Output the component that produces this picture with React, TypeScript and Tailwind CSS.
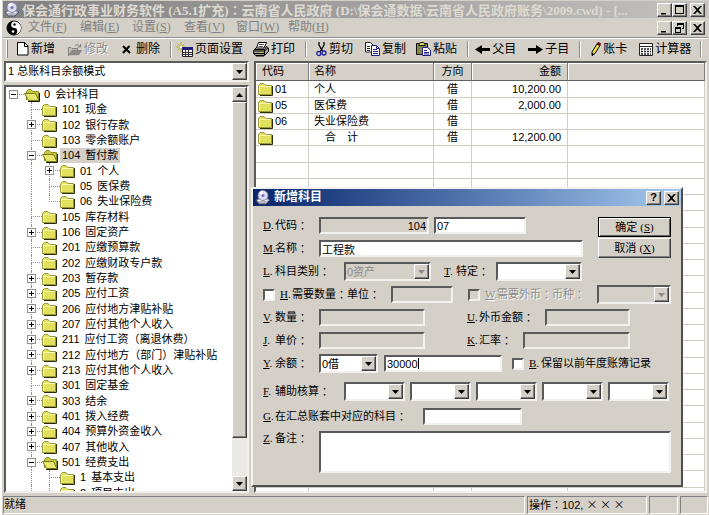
import type { ReactNode } from "react";
import clsx from "clsx";

const raised =
  "border border-t-white border-l-white border-b-[#404040] border-r-[#404040] shadow-[inset_-1px_-1px_0_#808080] bg-[#d4d0c8]";
const sunken =
  "border-2 border-t-[#5a5a5a] border-l-[#5a5a5a] border-b-[#f3f1ed] border-r-[#f3f1ed]";

/* ---------- icons ---------- */

const DiscIcon = () => (
  <svg width="16" height="15" viewBox="0 0 16 15" className="shrink-0">
    <path d="M1 10 L5 8 H12 L15 10 L11 14 H4 Z" fill="#b8b8c4" stroke="#50506a" />
    <path d="M3 10.5 H12" stroke="#fff" />
    <circle cx="8" cy="5.5" r="5" fill="#dcdcf4" stroke="#8484a8" />
    <path d="M8 5.5 L4 2.5 A5 5 0 0 1 8 .8 Z" fill="#fff" />
    <circle cx="8" cy="5.5" r="1.5" fill="#6c6cb8" />
  </svg>
);

const YinYangIcon = () => (
  <svg width="16" height="16" viewBox="0 0 16 16" className="shrink-0">
    <circle cx="8" cy="8" r="7" fill="#000" stroke="#000" />
    <path d="M9 1.5 A6.5 6.5 0 0 1 8 14.5 A3.2 3.2 0 0 0 8 8 A3.2 3.2 0 0 1 9 1.5" fill="#fff" />
    <circle cx="8.500" cy="4.500" r="1.200" fill="#000" />
    <circle cx="7" cy="11.500" r="1.300" fill="#fff" />
  </svg>
);

const FolderIcon = () => (
  <svg width="16" height="14" viewBox="0 0 16 14" className="shrink-0">
    <path d="M2 13.5 H14.5 V4" fill="none" stroke="#2c2c08" />
    <path d="M.5 12.5 V3.5 L2.5 1.5 H6 L8 3.5 H13.5 V12.5 Z" fill="#e2e05c" stroke="#98983c" />
    <path d="M1.5 12 V4.5 H13" fill="none" stroke="#fafab4" />
  </svg>
);

const OpenFolderIcon = () => (
  <svg width="17" height="14" viewBox="0 0 17 14" className="shrink-0">
    <path d="M2.5 12 V3.5 L4.5 1.5 H7 L9 3.5 H14.5 V12" fill="#c8c83c" stroke="#8c8c28" />
    <path d="M.5 5.5 H11.5 L15 12.5 H4.5 Z" fill="#e8e66c" stroke="#77771c" />
    <path d="M4 13.5 H15.5 V5" fill="none" stroke="#1c1c00" />
  </svg>
);

const NewIcon = () => (
  <svg width="12" height="14" viewBox="0 0 12 14">
    <path d="M.5 .5 H7.5 L11 4 V13 H.5 Z" fill="#fff" stroke="#000" />
    <path d="M7.5 .5 V4.5 H11" fill="none" stroke="#000" />
  </svg>
);

const EditIcon = () => (
  <svg width="15" height="13" viewBox="0 0 15 13">
    <path d="M1.5 12.5 V4.5 H4 L5 5.5 H10.5 V7.5" fill="#c4c0b8" stroke="#808080" />
    <path d="M1.5 12.5 L5 7.5 H14.5 L11 12.5 Z" fill="#8c8a84" stroke="#808080" />
    <path d="M8 2.5 Q11 0 13 3.5 M13.5 1 V4 H10.5" fill="none" stroke="#808080" />
    <path d="M2 13 H12" stroke="#fff" />
  </svg>
);

const DeleteIcon = () => (
  <svg width="9" height="9" viewBox="0 0 9 9">
    <path d="M1 1 L8 8 M7.5 1 L1 8" stroke="#000" strokeWidth="2" />
  </svg>
);

const PageSetupIcon = () => (
  <svg width="17" height="15" viewBox="0 0 17 15">
    <path d="M5 0 V10 M0 5 H10 M1.5 1.5 L8.5 8.5 M8.5 1.5 L1.5 8.5" stroke="#b4ac28" />
    <path d="M4 4 h2 v2 h-2 z" fill="#fff" />
    <path d="M6.500 5.500 H16.500 V14.500 H6.500 Z" fill="#fff" stroke="#222" />
    <path d="M6 5 H17 V8 H6 Z" fill="#20207c" />
    <path d="M7 10.500 H16 M7 12.500 H16 M9.500 8 V14 M12.500 8 V14" stroke="#333" />
  </svg>
);

const PrintIcon = () => (
  <svg width="16" height="15" viewBox="0 0 16 15">
    <path d="M5.500 .5 H13.500 L11 6 H3.500 Z" fill="#fff" stroke="#000" />
    <path d="M6 2.500 H11 M5.500 4.500 H10" stroke="#555" />
    <path d="M3.500 5.500 L.5 8.500 V11.500 L3 13.500 H11.500 L15.500 9.500 V6 L13.500 4.500 L11.500 7.500 H2" fill="#a8a69c" stroke="#000" />
    <path d="M1 9 H11.500 L15 6 M1 11.500 H11.500 M11.500 8 V13" fill="none" stroke="#000" />
    <path d="M7 10.500 H9.500" stroke="#e0d820" />
    <path d="M3 14 H11" stroke="#000" />
  </svg>
);

const CutIcon = () => (
  <svg width="11" height="15" viewBox="0 0 11 15">
    <path d="M3 0 V3 L7 10 M8 0 V3 L4 10" fill="none" stroke="#000" strokeWidth="1.3" />
    <circle cx="2.800" cy="11.500" r="2" fill="none" stroke="#20209c" strokeWidth="1.300" />
    <circle cx="8" cy="11" r="2" fill="none" stroke="#20209c" strokeWidth="1.300" />
  </svg>
);

const CopyIcon = () => (
  <svg width="15" height="14" viewBox="0 0 15 14">
    <path d="M.5 .5 H5.500 L8.500 3.500 V10 H.5 Z" fill="#fff" stroke="#222" />
    <path d="M2 4.500 H5 M2 6.500 H5 M2 8.500 H5" stroke="#333" />
    <path d="M6.500 3.500 H11.500 L14.500 6.500 V13.500 H6.500 Z" fill="#fff" stroke="#20208c" />
    <path d="M8 7.500 H12 M8 9.500 H13 M8 11.500 H13 M11.500 4 V6.500 H14" fill="none" stroke="#20208c" />
  </svg>
);

const PasteIcon = () => (
  <svg width="15" height="14" viewBox="0 0 15 14">
    <path d="M.5 1.500 H11.500 V12.500 H.5 Z" fill="#86864a" stroke="#111" />
    <path d="M3 3.500 V1.500 L5 .5 H7 L9 1.500 V3.500 Z" fill="#e0dc68" stroke="#111" />
    <path d="M6.500 5.500 H11.500 L14.500 8 V13.500 H6.500 Z" fill="#fff" stroke="#20208c" />
    <path d="M8 8.500 H11 M8 10.500 H13 M8 12 H13" stroke="#20208c" />
  </svg>
);

const ArrowIcon = ({ right }: { right?: boolean }) => (
  <svg width="15" height="9" viewBox="0 0 15 9">
    <path
      d={right ? "M15 4.500 L8 0 V3 H0 V6 H8 V9 Z" : "M0 4.500 L7 0 V3 H15 V6 H7 V9 Z"}
      fill="#000"
    />
  </svg>
);

const PencilIcon = () => (
  <svg width="10" height="14" viewBox="0 0 10 14">
    <path d="M1 10 L6 2 L9 3.500 L4 11.500 L1 13.500 Z" fill="#ece440" stroke="#000" />
    <path d="M6 2 L7 0.500 L9.500 1.500 L9 3.500 Z" fill="#7c1010" stroke="#5c0c0c" />
    <path d="M1 11 V14 L3.500 12 Z" fill="#000" />
  </svg>
);

const CalculatorIcon = () => (
  <svg width="14" height="13" viewBox="0 0 14 13">
    <path d="M.5 .5 H13.500 V12.500 H.5 Z" fill="#fff" stroke="#222" />
    <path d="M0 3.500 H14" stroke="#222" />
    <path d="M2 6 H12 M2 8.500 H12 M2 11 H12" stroke="#222" strokeWidth="1.500" strokeDasharray="2 1" />
  </svg>
);

const DownIcon = ({ className = "text-black" }: { className?: string }) => (
  <svg width="7" height="4" viewBox="0 0 7 4" className={className}>
    <path d="M0 0 H7 L3.500 4 Z" fill="currentColor" />
  </svg>
);

const captionPaths = {
  minimize: "M2 8 H7 V9.500 H2 Z",
  maximize: "M1 0 H10 V9 H1 Z M2 2 V8 H9 V2 Z",
  restore: "M3 0 H10 V6 H8 V5 H9 V2 H4 V3 H3 Z M1 4 H7 V10 H1 Z M2 6 V9 H6 V6 Z",
  close: "M1 1 H3 L5.500 3.500 L8 1 H10 L6.500 5 L10 9 H8 L5.500 6.500 L3 9 H1 L4.500 5 Z",
};

const CaptionButton = ({ kind, className }: { kind: keyof typeof captionPaths; className?: string }) => (
  <button
    type="button"
    aria-label={kind}
    className={clsx("flex h-[14px] w-[15px] items-center justify-center", raised, className)}
  >
    <svg width="11" height="10" viewBox="0 0 11 10">
      <path d={captionPaths[kind]} fillRule="evenodd" />
    </svg>
  </button>
);

/* ---------- data ---------- */

const menus = [
  ["文件", "F"],
  ["编辑", "E"],
  ["设置", "S"],
  ["查看", "V"],
  ["窗口", "W"],
  ["帮助", "H"],
];

type Node = { level: number; code: string; name: string; sign?: "+" | "-"; last?: boolean };

const nodes: Node[] = [
  { level: 0, code: "0", name: "会计科目", sign: "-" },
  { level: 1, code: "101", name: "现金" },
  { level: 1, code: "102", name: "银行存款", sign: "+" },
  { level: 1, code: "103", name: "零余额账户" },
  { level: 1, code: "104", name: "暂付款", sign: "-" },
  { level: 2, code: "01", name: "个人", sign: "+" },
  { level: 2, code: "05", name: "医保费" },
  { level: 2, code: "06", name: "失业保险费", last: true },
  { level: 1, code: "105", name: "库存材料" },
  { level: 1, code: "106", name: "固定资产", sign: "+" },
  { level: 1, code: "201", name: "应缴预算款" },
  { level: 1, code: "202", name: "应缴财政专户款" },
  { level: 1, code: "203", name: "暂存款", sign: "+" },
  { level: 1, code: "205", name: "应付工资", sign: "+" },
  { level: 1, code: "206", name: "应付地方津贴补贴", sign: "+" },
  { level: 1, code: "207", name: "应付其他个人收入", sign: "+" },
  { level: 1, code: "211", name: "应付工资（离退休费）", sign: "+" },
  { level: 1, code: "212", name: "应付地方（部门）津贴补贴", sign: "+" },
  { level: 1, code: "213", name: "应付其他个人收入", sign: "+" },
  { level: 1, code: "301", name: "固定基金" },
  { level: 1, code: "303", name: "结余", sign: "+" },
  { level: 1, code: "401", name: "拨入经费", sign: "+" },
  { level: 1, code: "404", name: "预算外资金收入", sign: "+" },
  { level: 1, code: "407", name: "其他收入", sign: "+" },
  { level: 1, code: "501", name: "经费支出", sign: "-" },
  { level: 2, code: "1", name: "基本支出" },
  { level: 2, code: "2", name: "项目支出" },
];

const rows = [
  { code: "01", name: "个人", side: "借", amount: "10,200.00" },
  { code: "05", name: "医保费", side: "借", amount: "2,000.00" },
  { code: "06", name: "失业保险费", side: "借", amount: "" },
  { code: "", name: "\u3000合\u3000计", side: "借", amount: "12,200.00" },
];

/* ---------- main window ---------- */

// the TC face centres the full-width colon in its cell
const Colon = () => <span className="font-['Noto_Sans_CJK_TC',sans-serif]">：</span>;

const ToolButton = ({ icon, text, disabled, className }: {
  icon: ReactNode;
  text: string;
  disabled?: boolean;
  className?: string;
}) => (
  <button
    type="button"
    disabled={disabled}
    className={clsx(
      "flex shrink-0 items-center gap-[2px] whitespace-nowrap",
      disabled && "text-[#8c8a86] [text-shadow:1px_1px_0_#fff]",
      className
    )}
  >
    {icon}
    {text}
  </button>
);

const Divider = () => <span className="h-4 w-[2px] shrink-0 border-l border-r border-l-[#909090] border-r-white" />;

const Toolbar = () => (
  <div className="flex h-[21px] items-center border-t border-white pr-1 pl-[3px] text-[12px]">
    <span className="mr-[9px] h-[18px] w-[2px] shrink-0 border-l border-r border-l-white border-r-[#808080]" />
    <ToolButton icon={<NewIcon />} text="新增" className="mr-3" />
    <ToolButton icon={<EditIcon />} text="修改" disabled className="mr-[14px]" />
    <ToolButton icon={<DeleteIcon />} text="删除" className="mr-[10px] gap-[5px]" />
    <Divider />
    <ToolButton icon={<PageSetupIcon />} text="页面设置" className="mr-[10px] ml-1" />
    <ToolButton icon={<PrintIcon />} text="打印" className="mr-[10px]" />
    <Divider />
    <ToolButton icon={<CutIcon />} text="剪切" className="mr-3 ml-[9px]" />
    <ToolButton icon={<CopyIcon />} text="复制" className="mr-[10px]" />
    <ToolButton icon={<PasteIcon />} text="粘贴" className="mr-[10px]" />
    <Divider />
    <ToolButton icon={<ArrowIcon />} text="父目" className="mr-3 ml-[6px]" />
    <ToolButton icon={<ArrowIcon right />} text="子目" className="mr-[10px]" />
    <Divider />
    <ToolButton icon={<PencilIcon />} text="账卡" className="mr-3 ml-[10px] gap-1" />
    <ToolButton icon={<CalculatorIcon />} text="计算器" className="mr-[9px]" />
    <Divider />
  </div>
);

const dots = "border-dotted border-[#909090]";

const TreeRow = ({ node }: { node: Node }) => {
  const open = node.sign === "-";
  return (
    <li className="flex h-[15px] nth-[3n]:h-4">
      {node.level > 0 && <span className="w-[18px] shrink-0" />}
      {node.level > 1 && <span className={clsx("ml-[7px] w-[11px] shrink-0 border-l", dots)} />}
      <span className="relative ml-[7px] flex w-[11px] shrink-0 flex-col">
        <span className={clsx("h-2 border-b", dots, node.level > 0 && "border-l")} />
        {node.level > 0 && !node.last && <span className={clsx("flex-1 border-l", dots)} />}
        {node.sign && (
          <button
            type="button"
            aria-label={open ? "折叠" : "展开"}
            className="absolute top-[3px] -left-1 flex size-[9px] items-center justify-center border border-[#909090] bg-white"
          >
            <svg width="5" height="5" viewBox="0 0 5 5">
              <path d={open ? "M0 2 H5 V3 H0 Z" : "M0 2 H2 V0 H3 V2 H5 V3 H3 V5 H2 V3 H0 Z"} />
            </svg>
          </button>
        )}
      </span>
      <span className="flex w-[17px] shrink-0 items-center">{open ? <OpenFolderIcon /> : <FolderIcon />}</span>
      <span
        className={clsx(
          "ml-px flex items-center gap-[5px] pr-[2px] pl-[2px] leading-[15px] whitespace-nowrap",
          node.code === "104" && "bg-[#d4d0c8]"
        )}
      >
        <span>{node.code}</span>
        {node.name}
      </span>
    </li>
  );
};

const Sidebar = () => (
  <aside className="flex w-[245px] shrink-0 flex-col">
    <div className={clsx("relative h-[21px] bg-white", sunken)}>
      <select aria-label="模式" className="h-full w-full appearance-none pl-[2px] outline-none">
        <option>1 总账科目余额模式</option>
      </select>
      <span className={clsx("pointer-events-none absolute inset-y-0 right-0 flex w-[15px] items-center justify-center", raised)}>
        <DownIcon />
      </span>
    </div>
    <div className={clsx("mt-[3px] flex min-h-0 flex-1 bg-white", sunken)}>
      <ul className="min-w-0 flex-1 overflow-hidden">
        {nodes.map((node) => (
          <TreeRow key={node.level + node.code} node={node} />
        ))}
      </ul>
      <div className="flex w-[15px] flex-col bg-[#ebe9e5]">
        <button type="button" aria-label="向上" className={clsx("flex h-[15px] items-center justify-center", raised)}>
          <DownIcon className="rotate-180" />
        </button>
        <div className={clsx("h-[336px]", raised)} />
        <div className="flex-1" />
        <button type="button" aria-label="向下" className={clsx("flex h-[15px] items-center justify-center", raised)}>
          <DownIcon />
        </button>
      </div>
    </div>
  </aside>
);

const th =
  "border-r border-b border-r-[#808080] border-b-[#606060] p-0 font-normal shadow-[inset_1px_1px_0_#fff]";
const td = "border-r border-b border-[#d0cdc5] p-0";

const Ledger = () => (
  <div className={clsx("min-w-0 flex-1 overflow-hidden bg-white", sunken)}>
    <table className="w-full table-fixed border-separate border-spacing-0 leading-[15px]">
      <colgroup>
        <col className="w-[53px]" />
        <col className="w-[125px]" />
        <col className="w-[38px]" />
        <col className="w-24" />
        <col />
      </colgroup>
      <thead>
        <tr className="h-[18px] bg-[#d4d0c8]">
          <th className={clsx(th, "pl-[6px] text-left")}>代码</th>
          <th className={clsx(th, "pl-[5px] text-left")}>名称</th>
          <th className={th}>方向</th>
          <th className={clsx(th, "pr-[6px] text-right")}>金额</th>
          <th className={th} />
        </tr>
      </thead>
      <tbody>
        {Array.from({ length: 26 }, (_, i) => {
          const row = rows[i];
          return (
            <tr key={i} className="h-4 nth-[4n+1]:h-[17px]">
              <td className={td}>
                {row && (
                  <span className="flex items-center gap-px pl-[2px]">
                    <FolderIcon />
                    {row.code}
                  </span>
                )}
              </td>
              <td className={clsx(td, "pl-[5px]")}>{row?.name}</td>
              <td className={clsx(td, "text-center")}>{row?.side}</td>
              <td className={clsx(td, "pr-[6px] text-right")}>{row?.amount}</td>
              <td className={td} />
            </tr>
          );
        })}
      </tbody>
    </table>
  </div>
);

const statusCell = "border border-t-[#808080] border-l-[#808080] border-b-white border-r-white";

/* ---------- dialog ---------- */

const Key = ({ children }: { children: string }) => (
  <span className="inline-block w-3 shrink-0 font-['Liberation_Serif',serif]">
    <span className="underline">{children}</span>.
  </span>
);

const Label = ({ k, htmlFor, className, children }: {
  k?: string;
  htmlFor: string;
  className?: string;
  children: ReactNode;
}) => (
  <label htmlFor={htmlFor} className={clsx("flex shrink-0 whitespace-nowrap", className)}>
    {k && <Key>{k}</Key>}
    {children}
    <Colon />
  </label>
);

const Field = ({ id, value, disabled, label, className }: {
  id: string;
  value?: string;
  disabled?: boolean;
  label?: string;
  className?: string;
}) => (
  <input
    id={id}
    type="text"
    aria-label={label}
    defaultValue={value}
    disabled={disabled}
    className={clsx(
      "h-[17px] min-w-0 shrink-0 px-px outline-none",
      sunken,
      disabled ? "bg-[#d4d0c8]" : "bg-white",
      className
    )}
  />
);

const Combo = ({ id, value = "", disabled, label, className }: {
  id: string;
  value?: string;
  disabled?: boolean;
  label?: string;
  className?: string;
}) => (
  <div className={clsx("relative h-[19px] shrink-0", sunken, disabled ? "bg-[#d4d0c8]" : "bg-white", className)}>
    <select
      id={id}
      aria-label={label}
      disabled={disabled}
      className={clsx("block h-full w-full appearance-none pl-px leading-[14px] outline-none", disabled && "text-[#8c8a86]")}
    >
      <option>{value}</option>
    </select>
    <span className={clsx("pointer-events-none absolute inset-y-0 right-0 flex w-[15px] items-center justify-center", raised)}>
      <DownIcon className={disabled ? "text-[#8c8a86]" : "text-black"} />
    </span>
  </div>
);

const Check = ({ id, disabled }: { id: string; disabled?: boolean }) => (
  <input
    id={id}
    type="checkbox"
    disabled={disabled}
    className={clsx("size-3 shrink-0 appearance-none", sunken, disabled ? "bg-[#d4d0c8]" : "bg-white")}
  />
);

const formRow = "flex h-[23px] items-center";

const AccountDialog = () => (
  <form
    role="dialog"
    aria-label="新增科目"
    className="absolute top-[187px] left-[249px] w-[432px] border-2 border-t-[#f3f1ed] border-l-[#f3f1ed] border-r-[#505050] border-b-[#505050] bg-[#d4d0c8]"
  >
    <div className="flex h-[17px] items-center gap-[3px] bg-linear-to-r from-[#0a246a] to-[#a6caf0] pr-[2px] pl-[2px] text-[12px] font-bold text-white">
      <DiscIcon />
      新增科目
      <button
        type="button"
        aria-label="帮助"
        className={clsx("ml-auto flex h-[14px] w-[15px] items-center justify-center text-[11px] leading-none text-black", raised)}
      >
        ?
      </button>
      <CaptionButton kind="close" />
    </div>

    <div className="px-[10px] pt-2 pb-3">
      <div className="flex justify-between">
        <div>
          <div className={formRow}>
            <Label k="D" htmlFor="parent" className="w-14">代码</Label>
            <Field id="parent" value="104" disabled className="mr-[5px] w-[110px] text-right text-black" />
            <Field id="code" value="07" label="下级代码" className="w-[92px]" />
          </div>
          <div className={formRow}>
            <Label k="M" htmlFor="name" className="w-14">名称</Label>
            <Field id="name" value="工程款" className="w-[264px]" />
          </div>
        </div>
        <div className="flex w-[73px] flex-col gap-px pt-[3px]">
          <button type="submit" className="h-5 border border-black bg-[#d4d0c8] shadow-[inset_1px_1px_0_#fff,inset_-1px_-1px_0_#606060]">
            确定 <span className="font-['Liberation_Serif',serif]">(<u>S</u>)</span>
          </button>
          <button type="button" className={clsx("h-5", raised)}>
            取消 <span className="font-['Liberation_Serif',serif]">(<u>X</u>)</span>
          </button>
        </div>
      </div>

      <div className={formRow}>
        <Label k="L" htmlFor="category" className="w-[81px]">科目类别</Label>
        <Combo id="category" value="0资产" disabled className="mr-[13px] w-[87px]" />
        <Label k="T" htmlFor="special" className="w-[52px]">特定</Label>
        <Combo id="special" className="w-[86px]" />
      </div>
      <div className={formRow}>
        <Check id="quantity" />
        <Label k="H" htmlFor="quantity" className="ml-[5px]">需要数量</Label>
        <Label htmlFor="unit" className="w-11">单位</Label>
        <Field id="unit" disabled className="mr-[15px] w-[62px]" />
        <Check id="foreign" disabled />
        <Label k="W" htmlFor="foreign" className="ml-[5px] text-[#8c8a86] [text-shadow:1px_1px_0_#fff]">
          需要外币
        </Label>
        <Label htmlFor="currency" className="text-[#8c8a86] [text-shadow:1px_1px_0_#fff]">币种</Label>
        <Combo id="currency" disabled className="ml-auto w-[74px]" />
      </div>
      <div className={formRow}>
        <Label k="V" htmlFor="count" className="w-14">数量</Label>
        <Field id="count" disabled className="mr-[42px] w-[106px]" />
        <Label k="U" htmlFor="foreignAmount" className="w-[78px]">外币金额</Label>
        <Field id="foreignAmount" disabled className="w-[85px]" />
      </div>
      <div className={formRow}>
        <Label k="J" htmlFor="price" className="w-14">单价</Label>
        <Field id="price" disabled className="mr-[42px] w-[106px]" />
        <Label k="K" htmlFor="rate" className="w-14">汇率</Label>
        <Field id="rate" disabled className="w-[107px]" />
      </div>
      <div className={formRow}>
        <Label k="Y" htmlFor="side" className="w-14">余额</Label>
        <Combo id="side" value="0借" className="mr-[6px] w-[59px]" />
        <div className="relative mr-[10px] flex shrink-0">
          <Field id="balance" value="30000" label="余额" className="w-[118px]" />
          <span className="absolute top-[3px] left-[34px] h-[11px] w-px bg-black" />
        </div>
        <Check id="keep" />
        <label htmlFor="keep" className="ml-[5px] flex shrink-0 whitespace-nowrap">
          <Key>B</Key>
          保留以前年度账簿记录
        </label>
      </div>
      <div className={clsx(formRow, "mt-[5px] gap-[5px]")}>
        <Label k="F" htmlFor="aux1" className="w-[76px]">辅助核算</Label>
        {[1, 2, 3, 4, 5].map((n) => (
          <Combo key={n} id={`aux${n}`} label={`辅助核算${n}`} className="w-[61px]" />
        ))}
      </div>
      <div className={clsx(formRow, "mt-[2px]")}>
        <Label k="G" htmlFor="summary" className="w-40">在汇总账套中对应的科目</Label>
        <Field id="summary" className="w-[99px]" />
      </div>
      <div className="mt-[3px] flex">
        <Label k="Z" htmlFor="memo" className="w-14">备注</Label>
        <textarea id="memo" className={clsx("h-[42px] min-w-0 flex-1 resize-none bg-white outline-none", sunken)} />
      </div>
    </div>
  </form>
);

export default function App() {
  return (
    <div className="relative flex h-screen flex-col overflow-hidden border-l-2 border-white bg-[#d4d0c8] px-px pt-px pb-px font-['Liberation_Sans','Noto_Sans_CJK_SC',sans-serif] text-[11px] leading-[15px] text-black">
      <header className="flex h-[17px] items-center bg-linear-to-r from-[#808080] to-[#c4c2be] pr-[3px] pl-px">
        <DiscIcon />
        <h1 className="ml-[2px] min-w-0 flex-1 font-['Liberation_Serif','Noto_Sans_CJK_SC',serif] text-[13px] font-bold whitespace-nowrap text-[#dedad2]">
          保会通行政事业财务软件 (A5.1扩充)
          <Colon />
          云南省人民政府 (D:\保会通数据\云南省人民政府账务\2009.cwd) - [...
        </h1>
        <CaptionButton kind="minimize" />
        <CaptionButton kind="maximize" />
        <CaptionButton kind="close" className="ml-[3px]" />
      </header>

      <nav className="flex h-[20px] items-center border-b border-[#909090] pr-[3px] pl-[3px] text-[12px] text-[#808080]">
        <YinYangIcon />
        <div className="ml-[6px] flex flex-1">
          {menus.map(([text, key]) => (
            <button key={key} type="button" className="w-[52px] text-left whitespace-nowrap">
              {text}
              <span className="font-['Liberation_Serif',serif]">(<u>{key}</u>)</span>
            </button>
          ))}
        </div>
        <CaptionButton kind="minimize" />
        <CaptionButton kind="restore" />
        <CaptionButton kind="close" className="ml-[3px]" />
      </nav>

      <Toolbar />

      <main className="mt-[2px] flex min-h-0 flex-1 gap-[5px] px-px">
        <Sidebar />
        <Ledger />
      </main>

      <footer className="mt-[3px] flex h-[18px] shrink-0 gap-[2px]">
        <div className={clsx("flex-1", statusCell)}>就绪</div>
        <div className={clsx("w-[120px] pl-px", statusCell)}>
          操作
          <Colon />
          102, <span className="font-['Noto_Sans_CJK_SC',sans-serif]">× × ×</span>
        </div>
        <div className={clsx("w-[29px]", statusCell)} />
        <div className={clsx("w-[28px]", statusCell)} />
      </footer>

      <AccountDialog />
    </div>
  );
}
